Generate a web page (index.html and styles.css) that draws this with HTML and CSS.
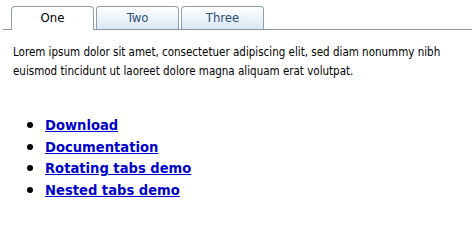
FILE: index.html
```html
<!DOCTYPE html>
<html>
<head>
<meta charset="utf-8">
<link rel="stylesheet" href="styles.css">
</head>
<body>
<div class="tabs">
  <a class="tab active">One</a>
  <a class="tab">Two</a>
  <a class="tab">Three</a>
</div>
<div class="panel">
  <p class="lorem">Lorem ipsum dolor sit amet, consectetuer adipiscing elit, sed diam nonummy nibh euismod tincidunt ut laoreet dolore magna aliquam erat volutpat.</p>
</div>
<ul class="links">
  <li><a href="#">Download</a></li>
  <li><a href="#">Documentation</a></li>
  <li><a href="#">Rotating tabs demo</a></li>
  <li><a href="#">Nested tabs demo</a></li>
</ul>
</body>
</html>
```
FILE: styles.css
```css
html, body {
  margin: 0;
  padding: 0;
  background: #fff;
}
body {
  font-family: "DejaVu Sans Condensed", "DejaVu Sans", sans-serif;
  color: #111;
}
.tabs {
  display: flex;
  gap: 2px;
  margin: 6px 0 0 3px;
  padding-left: 8px;
  border-bottom: 1px solid #8593a3;
  height: 23px;
}
.tab {
  box-sizing: border-box;
  width: 83px;
  height: 23px;
  border: 1px solid #8f9dac;
  border-bottom: none;
  border-radius: 4px 4px 0 0;
  background: linear-gradient(#ffffff, #d9e6f3);
  color: #2b5077;
  font-size: 13px;
  text-align: center;
  line-height: 22px;
}
.tab.active {
  background: #fff;
  color: #000;
  height: 24px;
  margin-bottom: -1px;
}
.panel {
  padding: 13px 4px 0 13px;
}
.lorem {
  margin: 0;
  font-size: 11.5px;
  line-height: 18.5px;
  color: #000;
}
.links {
  margin: 34px 0 0 0;
  padding-left: 27px;
  list-style: none;
}
.links li {
  display: flex;
  align-items: center;
  gap: 12px;
  font-size: 14.6px;
  font-weight: bold;
  line-height: 21.7px;
}
.links li::before {
  content: "";
  width: 6px;
  height: 6px;
  border-radius: 50%;
  background: #000;
}
.links a {
  color: #0000cc;
  text-decoration: underline;
}
```
